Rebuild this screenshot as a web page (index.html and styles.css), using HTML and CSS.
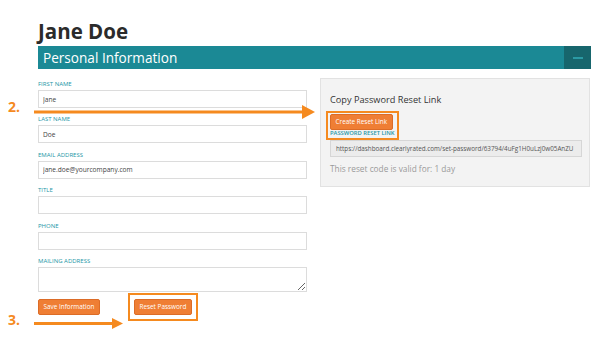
FILE: index.html
```html
<!DOCTYPE html>
<html lang="en">
<head>
  <meta charset="UTF-8" />
  <meta name="viewport" content="width=device-width, initial-scale=1.0"/>
  <title>Jane Doe - Personal Information</title>
  <link rel="stylesheet" href="styles.css">
</head>
<body>

  <div class="page">
    <h1 class="name">Jane Doe</h1>

    <div class="section-bar">
      <span class="section-title">Personal Information</span>
      <button class="collapse-btn" type="button"><span class="dash"></span></button>
    </div>

    <div class="content">
      <form class="profile-form">
        <div class="form-group">
          <label>First Name</label>
          <input type="text" value="Jane" />
        </div>
        <div class="form-group">
          <label>Last Name</label>
          <input type="text" value="Doe" />
        </div>
        <div class="form-group">
          <label>Email Address</label>
          <input type="email" value="jane.doe@yourcompany.com" />
        </div>
        <div class="form-group">
          <label>Title</label>
          <input type="text" />
        </div>
        <div class="form-group">
          <label>Phone</label>
          <input type="text" />
        </div>
        <div class="form-group form-group-last">
          <label>Mailing Address</label>
          <textarea></textarea>
        </div>
        <div class="form-actions">
          <button type="button" class="btn">Save Information</button>
          <div class="highlight highlight-wide">
            <button type="button" class="btn">Reset Password</button>
          </div>
        </div>
      </form>

      <div class="reset-panel">
        <h3>Copy Password Reset Link</h3>
        <div class="highlight">
          <button type="button" class="btn">Create Reset Link</button>
          <span class="link-label">Password Reset Link</span>
        </div>
        <input class="reset-url" type="text" readonly value="https://dashboard.clearlyrated.com/set-password/63794/4uFg1H0uLzj0w05AnZU" />
        <p class="reset-note">This reset code is valid for: 1 day</p>
      </div>
    </div>

    <!-- step annotations -->
    <span class="step step-two">2.</span>
    <svg class="arrow arrow-two" width="282" height="14" viewBox="0 0 282 14">
      <rect x="0" y="5.5" width="270" height="3" fill="#f58a1f"/>
      <polygon points="268,0 281,7 268,14" fill="#f58a1f"/>
    </svg>

    <span class="step step-three">3.</span>
    <svg class="arrow arrow-three" width="90" height="11" viewBox="0 0 90 11">
      <rect x="0" y="4" width="80" height="3" fill="#f58a1f"/>
      <polygon points="78,0 89,5.5 78,11" fill="#f58a1f"/>
    </svg>
  </div>

</body>
</html>
```

FILE: styles.css
```css
* {
  margin: 0;
  padding: 0;
  box-sizing: border-box;
  font-family: 'Open Sans', sans-serif;
}

body {
  background: #fff;
  color: #333;
}

.page {
  position: relative;
  width: 600px;
  height: 363px;
  padding: 18px 9px 0 38px;
}

.name {
  font-size: 20.5px;
  line-height: 26px;
  font-weight: 700;
  color: #2b2b2b;
  margin-bottom: 2px;
}

.section-bar {
  display: flex;
  height: 23px;
  background: #1b8995;
}

.section-title {
  flex: 1;
  padding-left: 5px;
  font-size: 13.6px;
  line-height: 23px;
  color: #fff;
}

.collapse-btn {
  width: 27px;
  border: none;
  background: #17666d;
  display: flex;
  align-items: center;
  justify-content: center;
}

.collapse-btn .dash {
  width: 10px;
  height: 2px;
  background: #2b9aa4;
}

.content {
  display: flex;
  align-items: flex-start;
  gap: 13px;
  margin-top: 9px;
}

.profile-form {
  width: 269px;
  padding-top: 2px;
}

.form-group {
  margin-bottom: 7.4px;
}

.form-group-last {
  margin-bottom: 1px;
}

.form-group label {
  display: block;
  font-size: 6px;
  line-height: 8px;
  text-transform: uppercase;
  color: #2496a6;
  margin-bottom: 2px;
}

.form-group input,
.form-group textarea {
  display: block;
  width: 100%;
  height: 18px;
  padding: 0 4px;
  border: 1px solid #dcdcdc;
  background: #fff;
  font-family: 'Open Sans', sans-serif;
  font-size: 6.6px;
  color: #444;
  outline: none;
}

.form-group textarea {
  height: 25px;
  resize: vertical;
}

.form-actions {
  display: flex;
  align-items: center;
  gap: 28px;
}

.btn {
  height: 16px;
  padding: 0 4.5px;
  background: #ef7e34;
  border: 1px solid #dc6c27;
  border-radius: 2px;
  color: #fff;
  font-family: 'Open Sans', sans-serif;
  font-size: 6.4px;
  white-space: nowrap;
}

.highlight {
  display: inline-flex;
  flex-direction: column;
  align-items: flex-start;
  border: 2px solid #f58a1f;
  padding: 1px 2px 1.5px;
  margin-left: -4px;
}

.highlight-wide {
  padding: 4px;
  margin-left: 0;
}

.reset-panel {
  width: 270px;
  background: #f3f3f3;
  border: 1px solid #e2e2e2;
  padding: 15px 9px 12px 8px;
}

.reset-panel h3 {
  font-size: 9.2px;
  line-height: 12px;
  font-weight: 400;
  color: #333;
  margin-left: 1px;
  margin-bottom: 1px;
}

.reset-panel .highlight {
  margin-left: -3px;
}

.link-label {
  font-size: 5.8px;
  line-height: 7px;
  font-weight: 600;
  text-transform: uppercase;
  color: #2496a6;
}

.reset-url {
  display: block;
  width: 252px;
  height: 17px;
  margin-left: 1px;
  padding: 0 5px;
  background: #ececec;
  border: 1px solid #d6d6d6;
  font-family: 'Open Sans', sans-serif;
  font-size: 6.3px;
  color: #555;
  outline: none;
}

.reset-note {
  margin-top: 6px;
  margin-left: 1px;
  font-size: 8.3px;
  line-height: 11px;
  color: #9a9a9a;
}

.step {
  position: absolute;
  left: 8px;
  font-size: 14px;
  line-height: 14px;
  font-weight: 700;
  color: #f58a1f;
}

.step-two {
  top: 100px;
}

.step-three {
  top: 313px;
}

.arrow {
  position: absolute;
  display: block;
}

.arrow-two {
  left: 34px;
  top: 104.5px;
}

.arrow-three {
  left: 34px;
  top: 318px;
}
```
